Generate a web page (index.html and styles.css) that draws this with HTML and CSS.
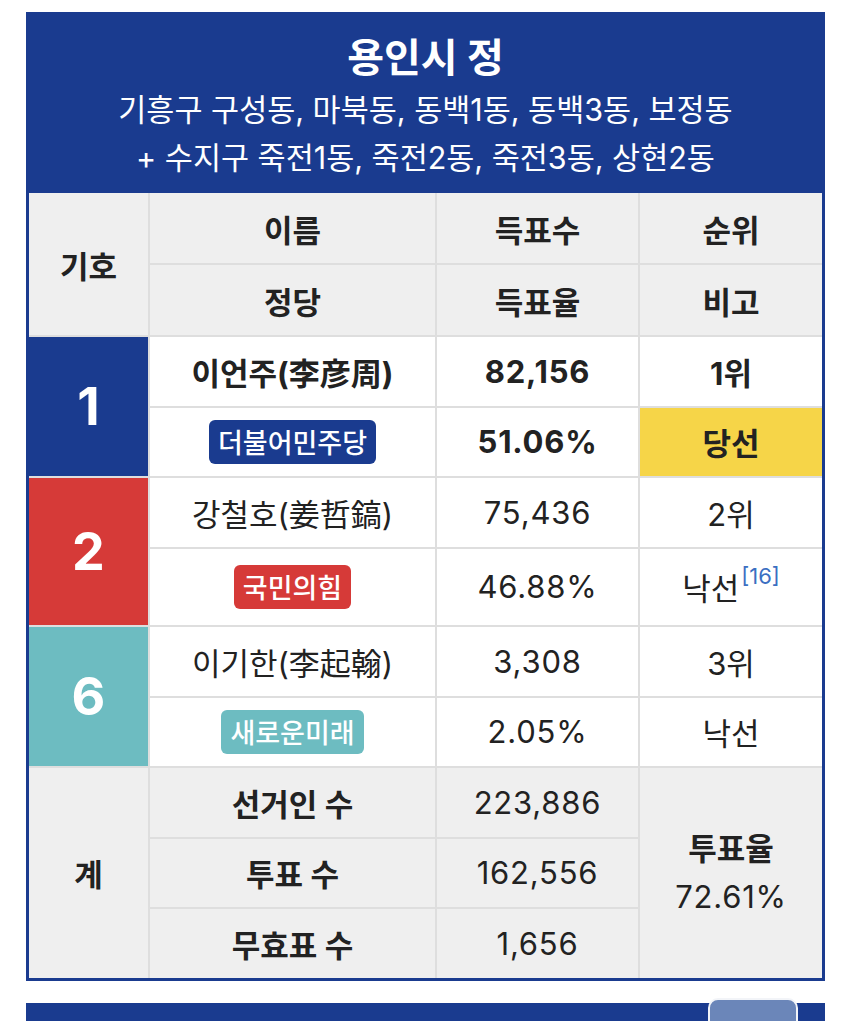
FILE: index.html
```html
<!DOCTYPE html>
<html lang="ko">
<head>
<meta charset="utf-8">
<title>용인시 정</title>
<link rel="stylesheet" href="styles.css">
</head>
<body>
<div class="box">
  <div class="box-head">
    <div class="title">용인시 정</div>
    <div class="sub">기흥구 구성동, 마북동, 동백1동, 동백3동, 보정동</div>
    <div class="sub">+ 수지구 죽전1동, 죽전2동, 죽전3동, 상현2동</div>
  </div>
  <div class="grid">
    <div class="c hd bold span2">기호</div>
    <div class="c hd bold">이름</div>
    <div class="c hd bold">득표수</div>
    <div class="c hd bold">순위</div>
    <div class="c hd bold">정당</div>
    <div class="c hd bold">득표율</div>
    <div class="c hd bold">비고</div>

    <div class="c sym span2 p-blue">1</div>
    <div class="c bold">이언주(李彦周)</div>
    <div class="c bold num">82,156</div>
    <div class="c bold">1위</div>
    <div class="c"><span class="badge p-blue">더불어민주당</span></div>
    <div class="c bold num">51.06%</div>
    <div class="c bold win">당선</div>

    <div class="c sym span2 p-red">2</div>
    <div class="c">강철호(姜哲鎬)</div>
    <div class="c num">75,436</div>
    <div class="c">2위</div>
    <div class="c"><span class="badge p-red">국민의힘</span></div>
    <div class="c num">46.88%</div>
    <div class="c">낙선<sup class="ref">[16]</sup></div>

    <div class="c sym span2 p-teal">6</div>
    <div class="c">이기한(李起翰)</div>
    <div class="c num">3,308</div>
    <div class="c">3위</div>
    <div class="c"><span class="badge p-teal">새로운미래</span></div>
    <div class="c num">2.05%</div>
    <div class="c">낙선</div>

    <div class="c hd bold span3">계</div>
    <div class="c hd bold">선거인 수</div>
    <div class="c hd num">223,886</div>
    <div class="c hd span3 col">
      <span class="bold">투표율</span>
      <span class="num">72.61%</span>
    </div>
    <div class="c hd bold">투표 수</div>
    <div class="c hd num">162,556</div>
    <div class="c hd bold">무효표 수</div>
    <div class="c hd num">1,656</div>
  </div>
</div>
<div class="box next">
  <div class="next-bar"><span class="next-btn"></span></div>
</div>
</body>
</html>
```

FILE: styles.css
```css
html, body {
  margin: 0;
  padding: 0;
  background: #ffffff;
}
body {
  font-family: "Inter", "Noto Sans CJK KR", sans-serif;
  color: #222222;
  padding-top: 12px;
  overflow: hidden;
}
.box {
  width: 799px;
  margin-left: 26px;
  box-sizing: border-box;
  border: 3px solid #1a3b8f;
  border-top: 0;
  background: #1a3b8f;
}
.box-head {
  color: #ffffff;
  text-align: center;
  padding: 22px 0 11px;
}
.title {
  font-size: 40px;
  font-weight: 700;
  line-height: 48px;
  margin-bottom: 4px;
}
.sub {
  font-size: 30.5px;
  line-height: 48px;
  font-weight: 400;
}
.grid {
  display: grid;
  grid-template-columns: 119px 285px 201px 182px;
  grid-template-rows: 70px 70px 68.5px 68.5px 68.5px 76.5px 68.5px 68.5px 68.5px 68.5px 68.5px;
  gap: 2px;
  background: #dedede;
}
.c {
  display: flex;
  align-items: center;
  justify-content: center;
  background: #ffffff;
  font-size: 31px;
  font-weight: 400;
  text-align: center;
}
.num { letter-spacing: 0.8px; }
.hd { background: #efefef; }
.bold { font-weight: 700; }
.span2 { grid-row: span 2; }
.span3 { grid-row: span 3; }
.col {
  flex-direction: column;
  line-height: 48px;
}
.sym {
  color: #ffffff;
  font-size: 52px;
  font-weight: 700;
}
.p-blue { background: #1a3b8f; }
.p-red { background: #d63a38; }
.p-teal { background: #6dbcc1; }
.win { background: #f6d548; }
.badge {
  display: inline-flex;
  align-items: center;
  height: 44px;
  padding: 0 9px;
  border-radius: 6px;
  color: #ffffff;
  font-size: 27px;
  font-weight: 500;
  letter-spacing: 0;
}
.ref {
  color: #3b6fc2;
  font-size: 22px;
  font-weight: 400;
  align-self: flex-start;
  margin-top: 14px;
  margin-left: 2px;
}
.next {
  margin-top: 22px;
  border: 0;
  background: transparent;
}
.next-bar {
  height: 40px;
  background: #1a3b8f;
  display: flex;
  justify-content: flex-end;
  padding-right: 27px;
}
.next-btn {
  width: 90px;
  height: 40px;
  margin-top: -5px;
  box-sizing: border-box;
  border-radius: 10px;
  border: 2px solid #f2f4f8;
  background: #6b86b9;
}
```
